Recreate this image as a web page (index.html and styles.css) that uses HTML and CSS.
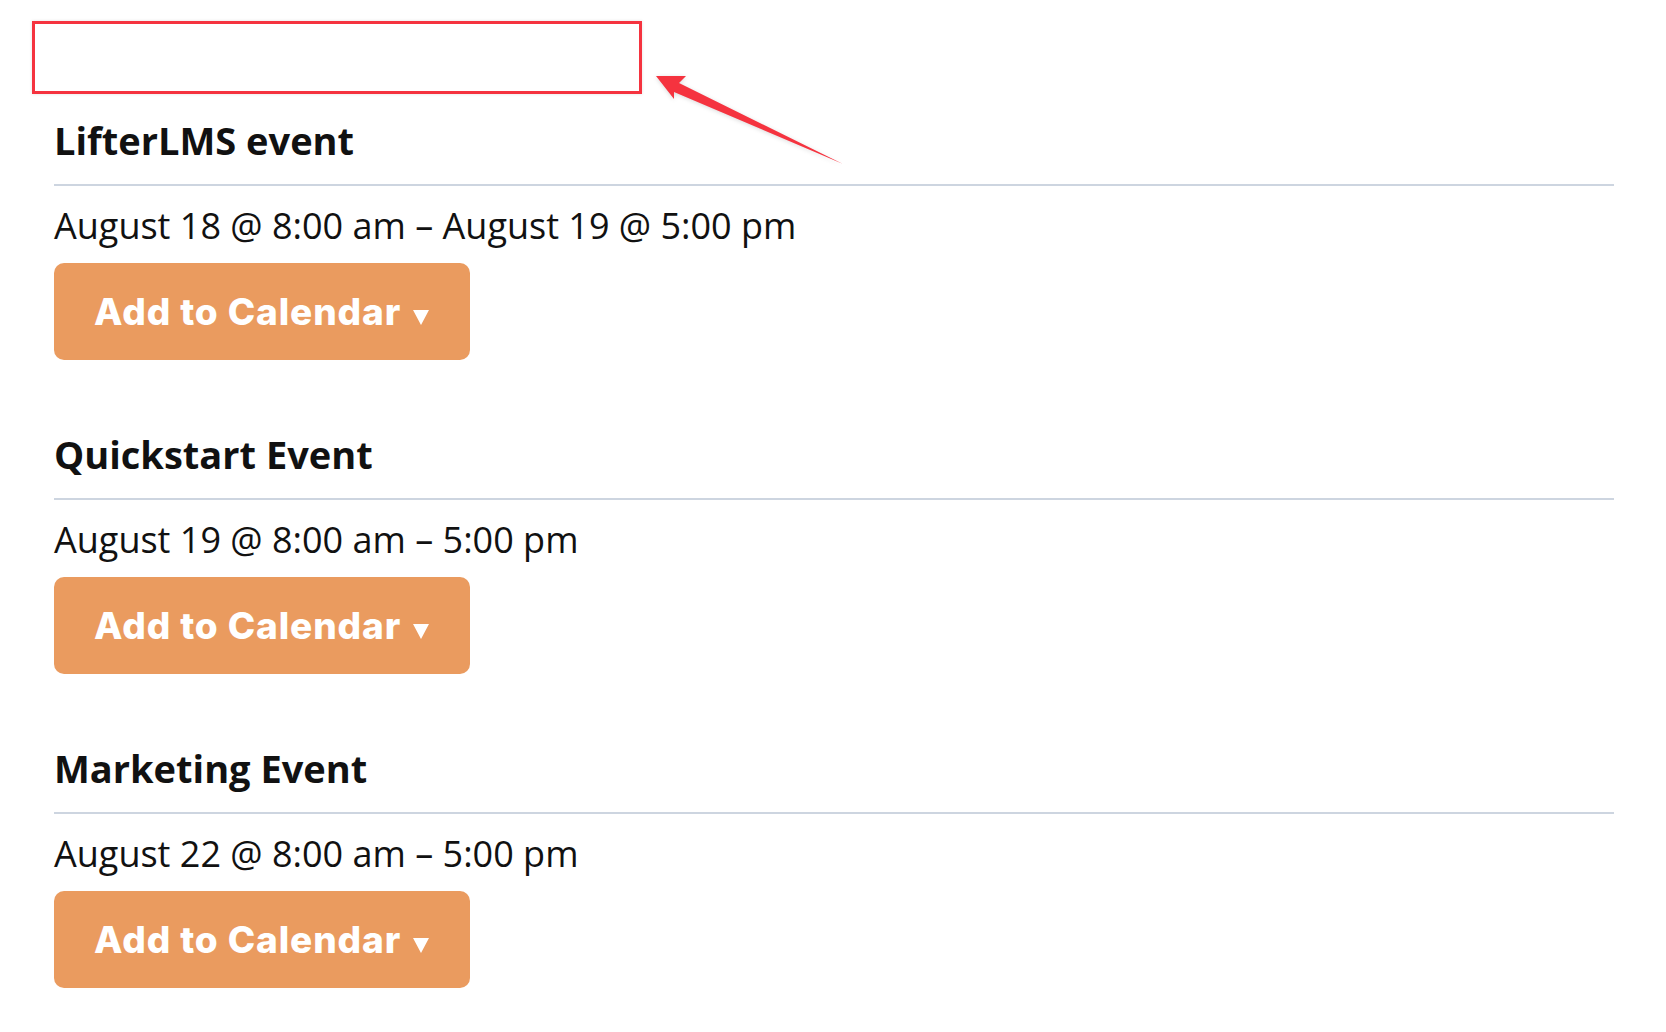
FILE: index.html
```html
<!DOCTYPE html>
<html lang="en">
<head>
    <meta charset="UTF-8">
    <meta name="viewport" content="width=device-width, initial-scale=1.0">
    <title>Events</title>
    <link rel="stylesheet" href="styles.css">
</head>
<body>

    <div class="page">
        <!-- empty area marked in the screenshot -->
        <div class="highlight"></div>

        <svg class="pointer" viewBox="0 0 1666 200" width="1666" height="200" aria-hidden="true">
            <polygon points="656,76 686,76 679,83 843,164 674,92 674,99" fill="#f5333f"/>
        </svg>

        <div class="events">
            <div class="event">
                <h2 class="event-title">LifterLMS event</h2>
                <p class="event-date">August 18 @ 8:00 am – August 19 @ 5:00 pm</p>
                <a href="#" class="calendar-button"><span>Add to Calendar<svg class="caret" viewBox="0 0 16 15" width="16" height="15"><polygon points="0,0 16,0 8,15" fill="#fff"/></svg></span></a>
            </div>

            <div class="event">
                <h2 class="event-title">Quickstart Event</h2>
                <p class="event-date">August 19 @ 8:00 am – 5:00 pm</p>
                <a href="#" class="calendar-button"><span>Add to Calendar<svg class="caret" viewBox="0 0 16 15" width="16" height="15"><polygon points="0,0 16,0 8,15" fill="#fff"/></svg></span></a>
            </div>

            <div class="event">
                <h2 class="event-title">Marketing Event</h2>
                <p class="event-date">August 22 @ 8:00 am – 5:00 pm</p>
                <a href="#" class="calendar-button"><span>Add to Calendar<svg class="caret" viewBox="0 0 16 15" width="16" height="15"><polygon points="0,0 16,0 8,15" fill="#fff"/></svg></span></a>
            </div>
        </div>
    </div>

</body>
</html>
```

FILE: styles.css
```css
body {
    margin: 0;
    padding: 0;
    background: #fff;
    color: #111;
    font-family: "Open Sans", Arial, sans-serif;
}
.page {
    position: relative;
    padding: 21px 52px 0 32px;
}
.highlight {
    width: 610px;
    height: 73px;
    box-sizing: border-box;
    border: 3px solid #f5333f;
    box-shadow: 0 0 3px rgba(0,0,0,0.12);
}
.pointer {
    position: absolute;
    left: 0;
    top: 0;
    pointer-events: none;
    filter: drop-shadow(0 1px 2px rgba(0,0,0,0.15));
}
.events {
    padding-left: 22px;
    margin-top: 22px;
}
.event {
    margin-bottom: 70px;
}
.event-title {
    margin: 0;
    font-size: 38px;
    font-weight: 700;
    line-height: 48px;
    padding-bottom: 20px;
    border-bottom: 2px solid #cdd5e0;
}
.event-date {
    margin: 18px 0 15px;
    font-size: 36px;
    line-height: 44px;
}
.calendar-button {
    display: flex;
    align-items: center;
    box-sizing: border-box;
    width: 416px;
    height: 97px;
    padding: 0 0 0 40px;
    background-color: #ea9b5f;
    border-radius: 10px;
    color: #fff;
    text-decoration: none;
    font-family: Inter, "Open Sans", sans-serif;
    font-weight: 800;
    font-size: 37px;
    line-height: 44px;
    letter-spacing: 0.9px;
    white-space: nowrap;
}
.caret {
    vertical-align: baseline;
    margin-left: 12px;
}
```
